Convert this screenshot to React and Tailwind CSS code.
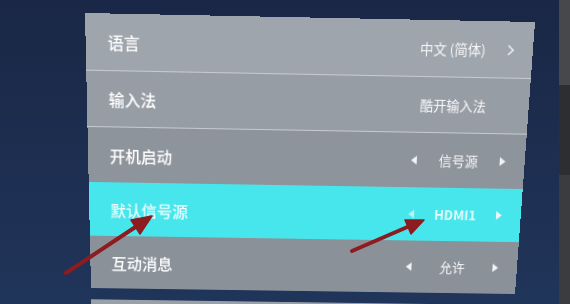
import React from 'react';

// the photo shows the menu at a slight angle, so the panel is laid out flat
// and then mapped onto the four corners measured on the reference
const quadMatrix = (W, H, [x0, y0], [x1, y1], [x2, y2], [x3, y3]) => {
  const dx1 = x1 - x2, dx2 = x3 - x2, dx3 = x0 - x1 + x2 - x3;
  const dy1 = y1 - y2, dy2 = y3 - y2, dy3 = y0 - y1 + y2 - y3;
  const den = dx1 * dy2 - dx2 * dy1;
  const g = (dx3 * dy2 - dx2 * dy3) / den;
  const h = (dx1 * dy3 - dx3 * dy1) / den;
  const a = x1 - x0 + g * x1, b = x3 - x0 + h * x3, c = x0;
  const d = y1 - y0 + g * y1, e = y3 - y0 + h * y3, f = y0;
  return `matrix3d(${a / W},${d / W},0,${g / W},${b / H},${e / H},0,${h / H},0,0,1,0,${c},${f},0,1)`;
};

const panelTransform = quadMatrix(450, 275, [85, 13], [535, 22], [515, 294], [91, 288]);

const rows = [
  { label: '语言', value: '中文 (简体)', kind: 'link', bg: 'bg-[#9fa5ad]', line: true },
  { label: '输入法', value: '酷开输入法', kind: 'plain', bg: 'bg-[#979da5]', line: true },
  { label: '开机启动', value: '信号源', kind: 'select', bg: 'bg-[#8e949c]' },
  { label: '默认信号源', value: 'HDMI1', kind: 'select', bg: 'bg-[#47e6ec]', active: true },
  { label: '互动消息', value: '允许', kind: 'select', bg: 'bg-[#8b9199]' },
];

const Tri = ({ dir, faded }) => (
  <svg width="6" height="9" viewBox="0 0 6 9" className={`shrink-0 ${faded ? 'opacity-70' : ''}`}>
    {dir === 'left' ? (
      <path d="M6 0 L0 4.5 L6 9 Z" fill="#f1f3f5" />
    ) : (
      <path d="M0 0 L6 4.5 L0 9 Z" fill="#f1f3f5" />
    )}
  </svg>
);

const Chevron = () => (
  <svg width="7" height="11" viewBox="0 0 7 11" className="ml-[22px] shrink-0">
    <path d="M1 1 L6 5.5 L1 10" fill="none" stroke="#f1f3f5" strokeWidth="1.5" />
  </svg>
);

const Row = ({ row }) => (
  <div
    className={`flex h-[55px] items-center pl-[22px] ${row.bg} ${
      row.line ? 'border-b border-[#c6cbd1]' : ''
    } ${row.kind === 'select' ? 'pr-[20px]' : 'pr-[19px]'}`}
  >
    <span
      className={`flex-1 text-[16px] font-medium ${
        row.active ? 'text-white/90 blur-[0.4px]' : 'text-white'
      }`}
    >
      {row.label}
    </span>
    {row.kind === 'link' && (
      <div className="flex items-center">
        <span className="text-[13.5px] text-[#f6f7f9]">{row.value}</span>
        <Chevron />
      </div>
    )}
    {row.kind === 'plain' && (
      <span className="mr-[25px] text-[13.5px] text-[#f6f7f9]">{row.value}</span>
    )}
    {row.kind === 'select' && (
      <div className="flex w-[98px] items-center">
        <Tri dir="left" faded={row.active} />
        <span
          className={`flex-1 text-center text-[13.5px] ${
            row.active ? 'font-bold text-white/85 blur-[0.4px]' : 'text-[#f6f7f9]'
          }`}
        >
          {row.value}
        </span>
        <Tri dir="right" />
      </div>
    )}
  </div>
);

const Arrows = () => (
  <svg width="570" height="304" viewBox="0 0 570 304" className="pointer-events-none absolute left-0 top-0">
    <g fill="#8c1c20" stroke="#8c1c20" strokeLinecap="round" strokeLinejoin="round">
      <line x1="66" y1="273" x2="140" y2="224" strokeWidth="4" />
      <polygon points="152,216 131,220 140,234" strokeWidth="1.5" />
      <line x1="352" y1="251" x2="412" y2="225" strokeWidth="4" />
      <polygon points="424,220 405,220 411,234" strokeWidth="1.5" />
    </g>
  </svg>
);

export default function App() {
  return (
    <div className="relative h-[304px] w-[570px] overflow-hidden bg-gradient-to-b from-[#1a2746] to-[#20355a] font-['Noto_Sans_CJK_SC','Noto_Sans',sans-serif]">
      <div className="flex h-full">
        <div className="relative flex-1">
          <div className="w-[450px] origin-top-left" style={{ transform: panelTransform }}>
            {rows.map((row) => (
              <Row key={row.label} row={row} />
            ))}
            <div className="mt-[12px] h-[40px] bg-[#9aa0a8]" />
          </div>
        </div>
        <div className="flex w-[11px] flex-col">
          <div className="h-[85px] bg-[#47484c]" />
          <div className="h-[90px] bg-[#2d2e31]" />
          <div className="flex-1 bg-[#3b3c3f]" />
        </div>
      </div>
      <Arrows />
    </div>
  );
}
